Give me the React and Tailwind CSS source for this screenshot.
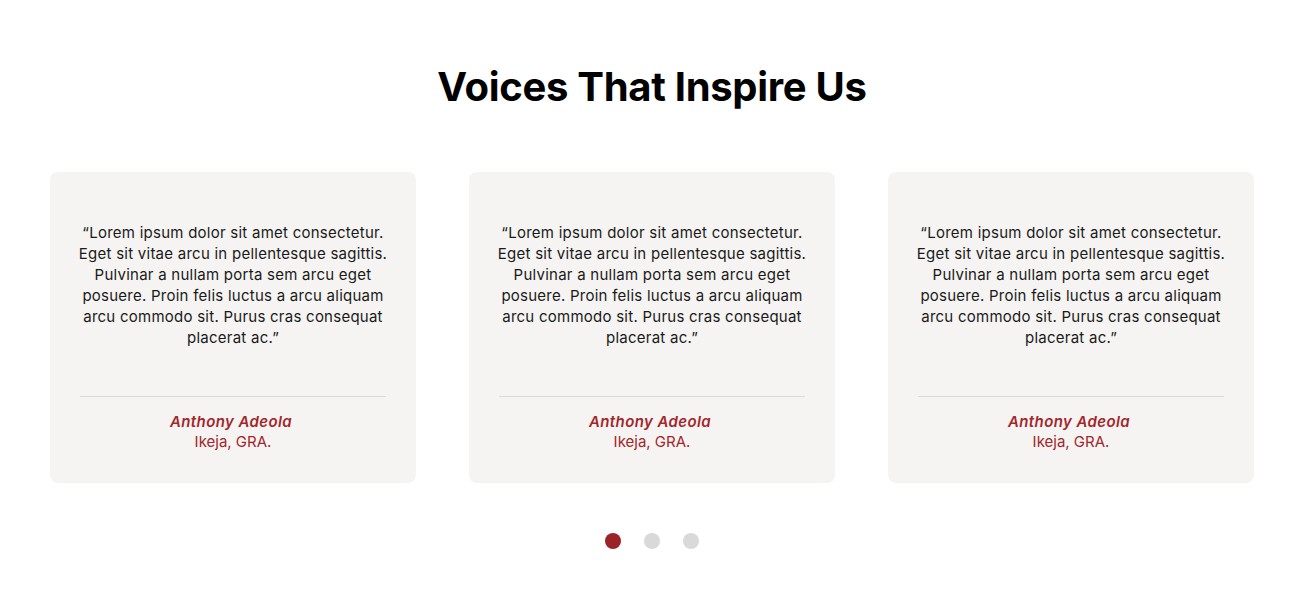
import React, { useState } from "react";

const testimonials = [
  { name: "Anthony Adeola", place: "Ikeja, GRA." },
  { name: "Anthony Adeola", place: "Ikeja, GRA." },
  { name: "Anthony Adeola", place: "Ikeja, GRA." },
];

const quote =
  "\u201CLorem ipsum dolor sit amet consectetur. Eget sit vitae arcu in pellentesque sagittis. Pulvinar a nullam porta sem arcu eget posuere. Proin felis luctus a arcu aliquam arcu commodo sit. Purus cras consequat placerat ac.\u201D";

const App = () => {
  const [active, setActive] = useState(0);

  return (
    <section
      className="bg-white w-full min-h-[589px] pt-[63px]"
      style={{ fontFamily: "Inter, 'Open Sans', sans-serif" }}
    >
      <h2 className="text-center text-[40px] leading-[48px] font-bold text-black tracking-[-0.3px] pr-[5px]">
        Voices That Inspire Us
      </h2>

      <div className="flex gap-[53px] pl-[50px] mt-[61px]">
        {testimonials.map((t, i) => (
          <div
            key={i}
            className="w-[366px] h-[311px] bg-[#f5f4f2] rounded-lg px-[28px] pt-[50px] flex flex-col"
          >
            <p className="text-center text-[15px] leading-[21px] text-[#1a1a1a] tracking-[0.25px]">
              {quote}
            </p>
            <div className="mt-auto mx-[2px] border-t border-[#d9d9d9]" />
            <div className="text-center pt-[15px] pb-[31px] text-[#a3262b] text-[15px] leading-[20px]">
              <p className="italic font-semibold tracking-[0.4px] pr-[4px]">{t.name}</p>
              <p>{t.place}</p>
            </div>
          </div>
        ))}
      </div>

      <div className="flex justify-center gap-[23px] mt-[50px] pr-[5px]">
        {[0, 1, 2].map((d) => (
          <button
            key={d}
            onClick={() => setActive(d)}
            className={
              d === active
                ? "w-4 h-4 rounded-full bg-[#9b2226]"
                : "w-4 h-4 rounded-full bg-[#d9d9d9]"
            }
          />
        ))}
      </div>
    </section>
  );
};

export default App;
